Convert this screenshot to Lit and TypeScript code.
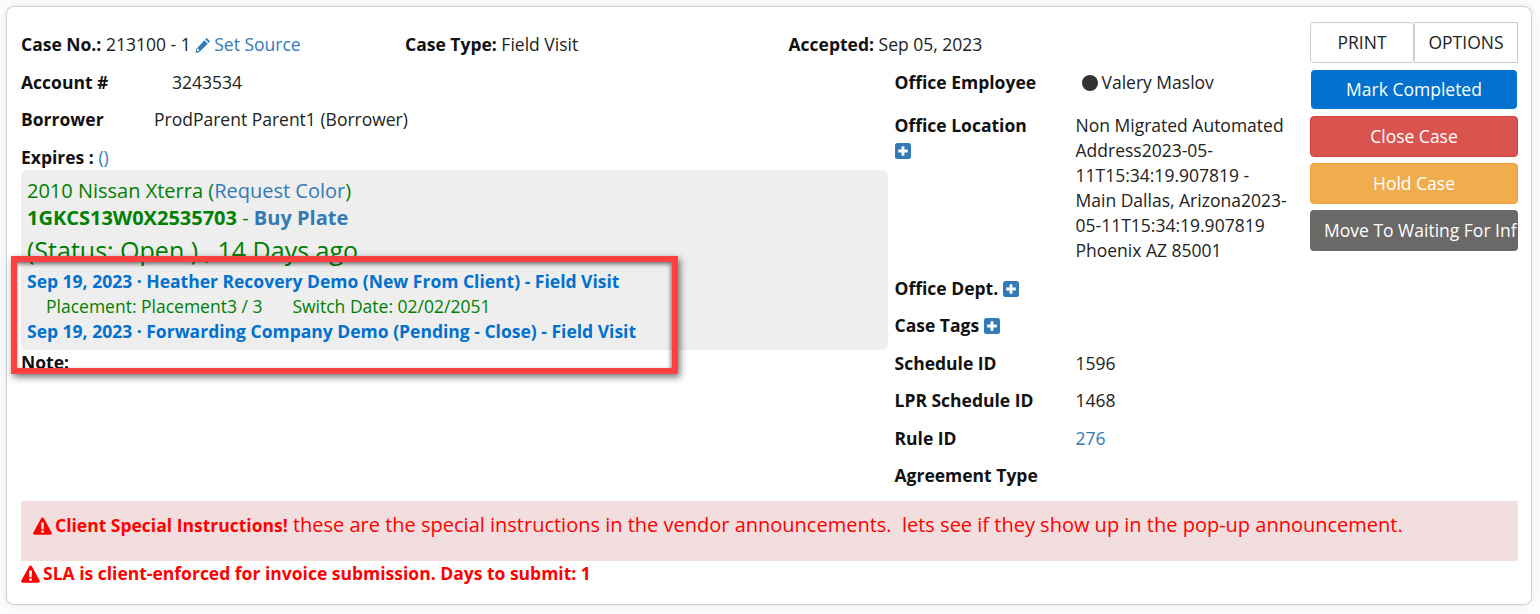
import { LitElement, html, css } from "lit";
import { customElement } from "lit/decorators.js";

const plus = html`<svg class="plus" viewBox="0 0 16 16"><rect width="16" height="16" rx="2.5" fill="#337ab7"/><path d="M8 3.2v9.6M3.2 8h9.6" stroke="#fff" stroke-width="2.8"/></svg>`;
const warn = html`<svg class="warn" viewBox="0 0 16 15"><path fill-rule="evenodd" fill="#f00" d="M8 0.3c.5 0 .9.3 1.1.7l6.6 11.9c.5.9-.1 1.9-1.1 1.9H1.4C.4 14.8-.2 13.8.3 12.9L6.9 1C7.1.6 7.5.3 8 .3zM6.8 4.6l.2 5.6h2l.2-5.6zM6.9 11.2v2h2.2v-2z"/></svg>`;
const pencil = html`<svg class="pencil" viewBox="0 0 16 16"><path fill="#337ab7" d="M11.6 0.9 15.1 4.4 13.7 5.8 10.2 2.3zM9.3 3.2l3.5 3.5-8.4 8.4-4 .9.9-4zM2.5 11.3l-.7 2.9 2.9-.7z"/></svg>`;

@customElement("app-root")
export class AppRoot extends LitElement {
  static styles = css`
    :host { display: block; width: 1540px; height: 614px; overflow: hidden; background: #fcfcfc; font-family: "Open Sans", sans-serif; font-size: 17.5px; color: #222; line-height: 25px; }
    * { box-sizing: border-box; }
    b { font-weight: 700; color: #111; }
    a { color: #337ab7; }
    .card { position: relative; margin: 7px 0 0 7px; width: 1524px; height: 597px; background: #fff; border-radius: 7px; box-shadow: 0 0 1px 1px rgba(0,0,0,.14), 0 0 10px rgba(0,0,0,.1); padding: 15px 13px 0 14px; }
    .top { display: grid; grid-template-columns: 1fr 208px; height: 479px; }
    .main { display: flex; flex-direction: column; min-width: 0; }
    .headrow { display: grid; grid-template-columns: 384px 383.5px 1fr; height: 47.5px; padding-top: 10px; }
    .cols { display: grid; grid-template-columns: 873.5px 1fr; }
    .left { display: flex; flex-direction: column; }
    .kv { display: flex; height: 37.5px; }
    .k1 { width: 151px; } .k2 { width: 133px; }
    .expires { height: 25.5px; }
    .gray { width: 867px; height: 180px; background: #eee; border-radius: 6px; padding: 8px 6px; overflow: hidden; color: #008000; }
    .gray .l1 { font-size: 20px; height: 25px; }
    .gray .l2 { font-size: 20px; height: 28px; line-height: 30px; }
    .gray .l2 b { color: #008000; } .gray .l2 a b { color: #337ab7; }
    .gray .l3 { font-size: 25px; height: 37.5px; line-height: 38px; white-space: nowrap; }
    .gray .l4 { height: 25px; color: #0071ce; font-weight: 700; white-space: nowrap; }
    .gray .l5 { height: 25px; padding-left: 19px; white-space: nowrap; display: flex; gap: 30px; }
    .note { height: 26px; }
    .right { display: grid; grid-template-columns: 181px 1fr; align-content: start; }
    .right > * { min-height: 37.5px; }
    .right > .emp { min-height: 43px; }
    .plus { width: 16px; height: 16px; display: inline-block; vertical-align: -2px; }
    .dot { display: inline-block; width: 16px; height: 16px; border-radius: 50%; background: #333; margin: 0 4px 0 6px; vertical-align: -2px; }
    .addr { width: 215px; min-height: 163px; }
    .btns { display: flex; flex-direction: column; align-items: stretch; }
    .pair { display: flex; height: 41px; margin-bottom: 7px; }
    .btn { height: 41px; border: 1px solid transparent; border-radius: 4px; color: #fff; display: flex; align-items: center; justify-content: center; margin-bottom: 6px; white-space: nowrap; overflow: hidden; }
    .pair .btn { flex: 1; color: #222; background: #fff; border-color: #ccc; margin: 0; }
    .pair .btn:last-child { border-radius: 0; }
    .blue { background: #0071ce; height: 39px; margin: 0 1px 7px; border: 0; }
    .red { background: #d9534f; border-color: #d43f3a; }
    .orange { background: #f0ad4e; border-color: #eea236; }
    .grey { background: #6b6967; justify-content: flex-start; padding-left: 13px; }
    .alert { height: 60px; background: #f2dede; color: #f00; font-size: 20px; padding: 11px 12px; white-space: pre; }
    .alert b, .sla b { color: #f00; font-size: 17.5px; }
    .warn { width: 19px; height: 18px; display: inline-block; vertical-align: -3px; margin-right: 3px; }
    .sla { color: #f00; height: 25px; }
    .pencil { width: 16px; height: 16px; vertical-align: -2px; display: inline-block; margin: 0 3px 0 0; }
    .mark { position: absolute; left: 4px; top: 249px; width: 667px; height: 118px; border: 6px solid #ff4040; box-shadow: 2px 3px 7px rgba(0,0,0,.55), inset -1px 2px 4px rgba(0,0,0,.55); pointer-events: none; }
  `;

  render() {
    return html`<div class="card">
      <div class="top">
        <div class="main">
          <div class="headrow">
            <div><b>Case No.:</b> 213100 - 1 ${pencil}<a>Set Source</a></div>
            <div><b>Case Type:</b> Field Visit</div>
            <div><b>Accepted:</b> Sep 05, 2023</div>
          </div>
          <div class="cols">
            <div class="left">
              <div class="kv"><b class="k1">Account #</b><span>3243534</span></div>
              <div class="kv"><b class="k2">Borrower</b><span>ProdParent Parent1 (Borrower)</span></div>
              <div class="expires"><b>Expires :</b> <a>()</a></div>
              <div class="gray">
                <div class="l1">2010 Nissan Xterra (<a>Request Color</a>)</div>
                <div class="l2"><b>1GKCS13W0X2535703</b> - <a><b>Buy Plate</b></a></div>
                <div class="l3">(Status: Open ) , 14 Days ago</div>
                <div class="l4">Sep 19, 2023 · Heather Recovery Demo (New From Client) - Field Visit</div>
                <div class="l5"><span>Placement: Placement3 / 3</span><span>Switch Date: 02/02/2051</span></div>
                <div class="l4">Sep 19, 2023 · Forwarding Company Demo (Pending - Close) - Field Visit</div>
              </div>
              <div class="note"><b>Note:</b></div>
            </div>
            <div class="right">
              <b class="emp">Office Employee</b><div class="emp"><span class="dot"></span>Valery Maslov</div>
              <div><b>Office Location</b><br />${plus}</div><div class="addr">Non Migrated Automated Address2023-05-11T15:34:19.907819 - Main Dallas, Arizona2023-05-11T15:34:19.907819 Phoenix AZ 85001</div>
              <div><b>Office Dept.</b> ${plus}</div><div></div>
              <div><b>Case Tags</b> ${plus}</div><div></div>
              <div><b>Schedule ID</b></div><div>1596</div>
              <div><b>LPR Schedule ID</b></div><div>1468</div>
              <div><b>Rule ID</b></div><div><a>276</a></div>
              <div><b>Agreement Type</b></div><div></div>
            </div>
          </div>
        </div>
        <div class="btns">
          <div class="pair"><div class="btn">PRINT</div><div class="btn">OPTIONS</div></div>
          <div class="btn blue">Mark Completed</div>
          <div class="btn red">Close Case</div>
          <div class="btn orange">Hold Case</div>
          <div class="btn grey">Move To Waiting For Info</div>
        </div>
      </div>
      <div class="alert">${warn}<b>Client Special Instructions!</b> these are the special instructions in the vendor announcements.  lets see if they show up in the pop-up announcement.</div>
      <div class="sla">${warn}<b>SLA is client-enforced for invoice submission. Days to submit: 1</b></div>
      <div class="mark"></div>
    </div>`;
  }
}
